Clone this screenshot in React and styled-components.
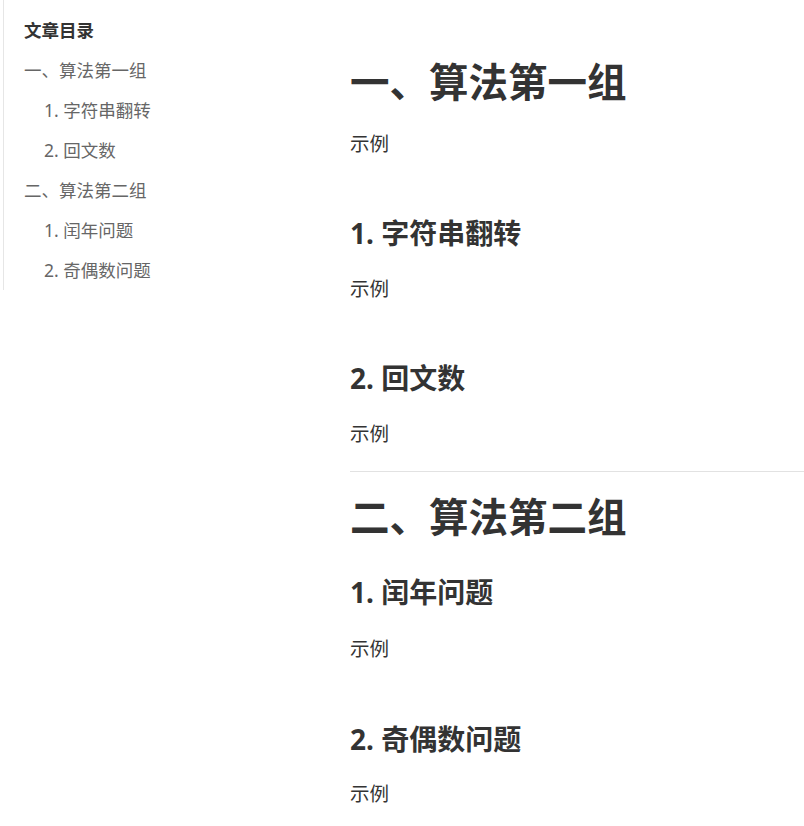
import React from "react";
import styled, { createGlobalStyle } from "styled-components";

const toc = [
  { title: "一、算法第一组", level: 1 },
  { title: "1. 字符串翻转", level: 2 },
  { title: "2. 回文数", level: 2 },
  { title: "二、算法第二组", level: 1 },
  { title: "1. 闰年问题", level: 2 },
  { title: "2. 奇偶数问题", level: 2 },
];

const GlobalStyle = createGlobalStyle`
  body {
    margin: 0;
    background: #fff;
    font-family: "Noto Sans", "Noto Sans CJK SC", sans-serif;
    color: #333;
  }
`;

const Page = styled.div`
  display: flex;
  align-items: flex-start;
  width: 804px;
  overflow: hidden;
`;

const Sidebar = styled.nav`
  width: 325px;
  margin-left: 3px;
  padding: 10px 0 0 20px;
  border-left: 1px solid #e6e6e6;
  box-sizing: border-box;
`;

const TocTitle = styled.div`
  height: 40px;
  line-height: 40px;
  font-size: 17.5px;
  font-weight: 700;
  color: #333;
`;

const TocItem = styled.a`
  display: block;
  height: 40px;
  line-height: 40px;
  font-size: 17.5px;
  color: #666;
  text-decoration: none;
  padding-left: ${(p) => (p.$level === 2 ? "20px" : "0")};
`;

const Main = styled.main`
  flex: 1;
  padding: 52px 0 0 22px;
`;

const H1 = styled.h1`
  margin: ${(p) => p.$mt || 0}px 0 0;
  font-size: 39.5px;
  line-height: 60px;
  font-weight: 700;
  color: #333;
`;

const H2 = styled.h2`
  margin: ${(p) => p.$mt}px 0 0;
  font-size: 28px;
  line-height: 42px;
  font-weight: 700;
  color: #333;
`;

const Para = styled.p`
  margin: ${(p) => p.$mt}px 0 0;
  font-size: 19.5px;
  line-height: 30px;
  color: #333;
`;

const Rule = styled.hr`
  margin: 22px 0 0;
  border: 0;
  border-top: 1px solid #e2e2e2;
`;

export default function App() {
  return (
    <>
      <GlobalStyle />
      <Page>
        <Sidebar>
          <TocTitle>文章目录</TocTitle>
          {toc.map((t) => (
            <TocItem key={t.title} $level={t.level}>
              {t.title}
            </TocItem>
          ))}
        </Sidebar>
        <Main>
          <H1>一、算法第一组</H1>
          <Para $mt={17}>示例</Para>
          <H2 $mt={53}>1. 字符串翻转</H2>
          <Para $mt={20}>示例</Para>
          <H2 $mt={53}>2. 回文数</H2>
          <Para $mt={20}>示例</Para>
          <Rule />
          <H1 $mt={15}>二、算法第二组</H1>
          <H2 $mt={24}>1. 闰年问题</H2>
          <Para $mt={21}>示例</Para>
          <H2 $mt={54}>2. 奇偶数问题</H2>
          <Para $mt={19}>示例</Para>
        </Main>
      </Page>
    </>
  );
}
